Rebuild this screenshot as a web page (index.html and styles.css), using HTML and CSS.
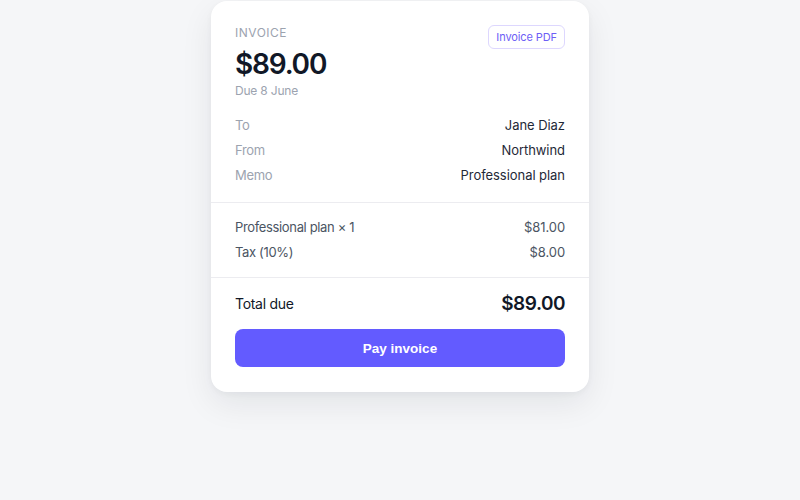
FILE: index.html
```html
<!DOCTYPE html>
<html lang="en">
<head>
<meta charset="utf-8">
<title>Invoice</title>
<link rel="stylesheet" href="styles.css">
</head>
<body>
<main class="page">
  <section class="card">
    <div class="section head">
      <div class="head-top">
        <div class="head-main">
          <div class="eyebrow">Invoice</div>
          <div class="amount">$89.00</div>
          <div class="due">Due 8 June</div>
        </div>
        <button class="pdf-btn" type="button">Invoice PDF</button>
      </div>
      <div class="meta">
        <div class="meta-row"><span class="meta-label">To</span><span class="meta-value">Jane Diaz</span></div>
        <div class="meta-row"><span class="meta-label">From</span><span class="meta-value">Northwind</span></div>
        <div class="meta-row"><span class="meta-label">Memo</span><span class="meta-value">Professional plan</span></div>
      </div>
    </div>
    <div class="section items">
      <div class="item-row"><span class="item-label">Professional plan × 1</span><span class="item-value">$81.00</span></div>
      <div class="item-row"><span class="item-label">Tax (10%)</span><span class="item-value">$8.00</span></div>
    </div>
    <div class="section total">
      <div class="total-row"><span class="total-label">Total due</span><span class="total-value">$89.00</span></div>
      <button class="pay-btn" type="button">Pay invoice</button>
    </div>
  </section>
</main>
</body>
</html>
```

FILE: styles.css
```css
* { box-sizing: border-box; }
html, body { margin: 0; padding: 0; }
body {
  background: #f5f6f8;
  font-family: Inter, "Noto Sans", sans-serif;
  color: #111827;
  width: 800px;
  height: 500px;
  overflow: hidden;
}
.page {
  display: flex;
  justify-content: center;
  padding-top: 1px;
}
.card {
  width: 378px;
  background: #ffffff;
  border-radius: 16px;
  box-shadow: 0 12px 32px rgba(17, 24, 39, 0.08), 0 2px 6px rgba(17, 24, 39, 0.04);
}
.section { padding: 16px 24px; }
.section + .section { border-top: 1px solid #ececf0; }
.head { padding: 24px 24px 18px; }
.head-top {
  display: flex;
  justify-content: space-between;
  align-items: flex-start;
}
.eyebrow {
  font-size: 12px;
  line-height: 16px;
  text-transform: uppercase;
  letter-spacing: 0.5px;
  color: #9ca3af;
}
.amount {
  margin-top: 6px;
  font-size: 28px;
  line-height: 34px;
  font-weight: 600;
  color: #111827;
  letter-spacing: -1.2px;
}
.due {
  margin-top: 2px;
  font-size: 12px;
  line-height: 16px;
  color: #9ca3af;
  letter-spacing: -0.2px;
}
.pdf-btn {
  font-family: Inter, "Noto Sans", sans-serif;
  font-size: 11px;
  line-height: 14px;
  letter-spacing: -0.1px;
  color: #6d5ef6;
  background: #fff;
  border: 1px solid #ddd7fe;
  border-radius: 6px;
  padding: 4px 7px;
  height: 24px;
  margin-top: 0;
}
.meta {
  margin-top: 18px;
  display: flex;
  flex-direction: column;
  gap: 8px;
}
.meta-row, .item-row {
  display: flex;
  justify-content: space-between;
  font-size: 13px;
  line-height: 17px;
}
.meta-label { color: #9ca3af; letter-spacing: -0.3px; }
.meta-value { color: #1f2937; letter-spacing: -0.05px; }
.items {
  display: flex;
  flex-direction: column;
  gap: 8px;
  color: #4b5563;
}
.item-label { letter-spacing: -0.35px; }
.item-value { letter-spacing: -0.1px; }
.total { padding: 14px 24px 25px; }
.total-row {
  display: flex;
  justify-content: space-between;
  align-items: center;
  height: 22px;
}
.total-label { font-size: 14px; color: #111827; letter-spacing: -0.3px; }
.total-value { font-size: 19px; font-weight: 600; color: #111827; letter-spacing: -0.5px; }
.pay-btn {
  display: block;
  width: 100%;
  height: 38px;
  margin-top: 15px;
  border: 0;
  border-radius: 8px;
  background: #635bff;
  color: #ffffff;
  font-family: "Liberation Sans", Arial, sans-serif;
  font-size: 13.5px;
  font-weight: 700;
}
```
